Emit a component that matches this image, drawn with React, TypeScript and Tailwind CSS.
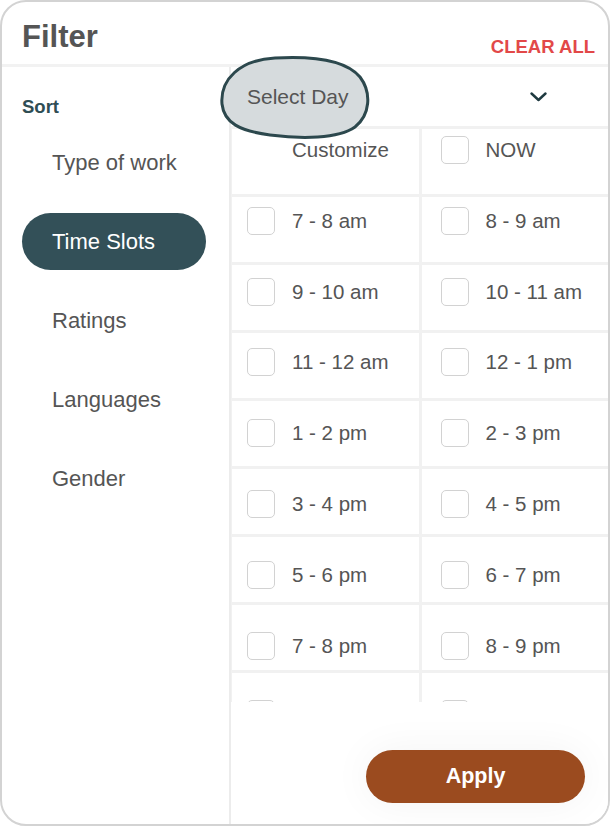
import React from "react";

const slots: [string, string][] = [
  ["7 - 8 am", "8 - 9 am"],
  ["9 - 10 am", "10 - 11 am"],
  ["11 - 12 am", "12 - 1 pm"],
  ["1 - 2 pm", "2 - 3 pm"],
  ["3 - 4 pm", "4 - 5 pm"],
  ["5 - 6 pm", "6 - 7 pm"],
  ["7 - 8 pm", "8 - 9 pm"],
  ["", ""],
];

const rowPad = [
  "pt-[7px]",
  "pt-[10px]",
  "pt-[13px]",
  "pt-[15px]",
  "pt-[18px]",
  "pt-[21px]",
  "pt-[24px]",
  "pt-[27px]",
  "pt-[27px]",
];

function Box({ hidden }: { hidden?: boolean }) {
  return (
    <span
      className={
        hidden
          ? "w-[28px] h-[28px] shrink-0"
          : "w-[28px] h-[28px] shrink-0 rounded-[5px] border-[1.5px] border-[#d2d2d2] bg-white"
      }
    />
  );
}

function Cell({
  label,
  col,
  row,
  noBox,
}: {
  label: string;
  col: number;
  row: number;
  noBox?: boolean;
}) {
  return (
    <div
      className={`h-[65px] bg-white flex items-start ${col === 0 ? "pl-[15px]" : "pl-[19px]"} ${rowPad[row]}`}
    >
      <div className="flex items-center gap-[17px] h-[28px]">
        <Box hidden={noBox} />
        <span className="text-[20.5px] leading-[24px] text-[#555555] whitespace-nowrap">{label}</span>
      </div>
    </div>
  );
}

export default function App() {
  const items = ["Type of work", "Time Slots", "Ratings", "Languages", "Gender"];
  return (
    <div
      className="w-[610px] h-[826px] bg-white"
      style={{ fontFamily: '"Liberation Sans", Arial, sans-serif' }}
    >
      <div className="w-[610px] h-[826px] border-2 border-[#d3d3d3] rounded-[26px] overflow-hidden flex flex-col bg-white">
        {/* Header */}
        <div className="h-[65px] shrink-0 flex items-start justify-between pl-[20px] pr-[13px] border-b-[3px] border-[#f2f2f2]">
          <span className="mt-[20px] text-[31px] leading-[30px] font-bold text-[#555555]">Filter</span>
          <span className="mt-[36px] text-[18.5px] leading-[18px] font-bold text-[#e24848]">
            CLEAR ALL
          </span>
        </div>
        {/* Body */}
        <div className="flex flex-1 min-h-0">
          {/* Sidebar */}
          <div className="w-[229px] shrink-0 border-r-2 border-[#ececec] pl-[20px] pt-[30px]">
            <div className="text-[18.5px] leading-[20px] font-bold text-[#2f4d54]">Sort</div>
            <div className="mt-[17px] flex flex-col gap-[22px]">
              {items.map((it) => (
                <div
                  key={it}
                  className={
                    it === "Time Slots"
                      ? "w-[184px] h-[57px] rounded-full bg-[#335058] text-white flex items-center pl-[30px] text-[22px]"
                      : "w-[184px] h-[57px] flex items-center pl-[30px] text-[22px] text-[#555555]"
                  }
                >
                  {it}
                </div>
              ))}
            </div>
          </div>
          {/* Right column */}
          <div className="flex-1 flex flex-col min-w-0">
            <div className="h-[59px] shrink-0 relative flex items-center pl-[16px]">
              <svg
                className="absolute left-[-12px] top-[-13px]"
                width="152"
                height="86"
                viewBox="0 0 152 86"
              >
                <path
                  d="M3,50 C1,26 20,6 56,4 C92,2 126,5 141,23 C153,39 151,61 136,73 C119,85 82,85 51,81 C21,77 5,69 3,50 Z"
                  fill="#d6dbdd"
                  stroke="#2c484d"
                  strokeWidth="3"
                />
              </svg>
              <span className="relative text-[21px] leading-[24px] text-[#555555] mt-[1px]">Select Day</span>
              <svg
                className="ml-auto mr-[61px]"
                width="17"
                height="10"
                viewBox="0 0 17 10"
              >
                <polyline
                  points="1.5,1.5 8.5,8 15.5,1.5"
                  fill="none"
                  stroke="#1f3a40"
                  strokeWidth="2.4"
                  strokeLinecap="round"
                  strokeLinejoin="round"
                />
              </svg>
            </div>
            <div className="h-[576px] shrink-0 overflow-hidden bg-[#f1f1f1] pt-[3px] pl-[1px]">
              <div className="grid grid-cols-2 gap-x-[3px] gap-y-[3px]">
                <Cell label="Customize" col={0} row={0} noBox />
                <Cell label="NOW" col={1} row={0} />
                {slots.map(([a, b], i) => (
                  <React.Fragment key={i}>
                    <Cell label={a} col={0} row={i + 1} />
                    <Cell label={b} col={1} row={i + 1} />
                  </React.Fragment>
                ))}
              </div>
            </div>
            <div className="flex-1 bg-white flex justify-end items-start pt-[48px] pr-[23px]">
              <button className="w-[219px] h-[53px] rounded-full bg-[#9b4b1f] text-white text-[21.5px] font-bold shadow-[0_0_40px_rgba(0,0,0,0.05)]">
                Apply
              </button>
            </div>
          </div>
        </div>
      </div>
    </div>
  );
}
